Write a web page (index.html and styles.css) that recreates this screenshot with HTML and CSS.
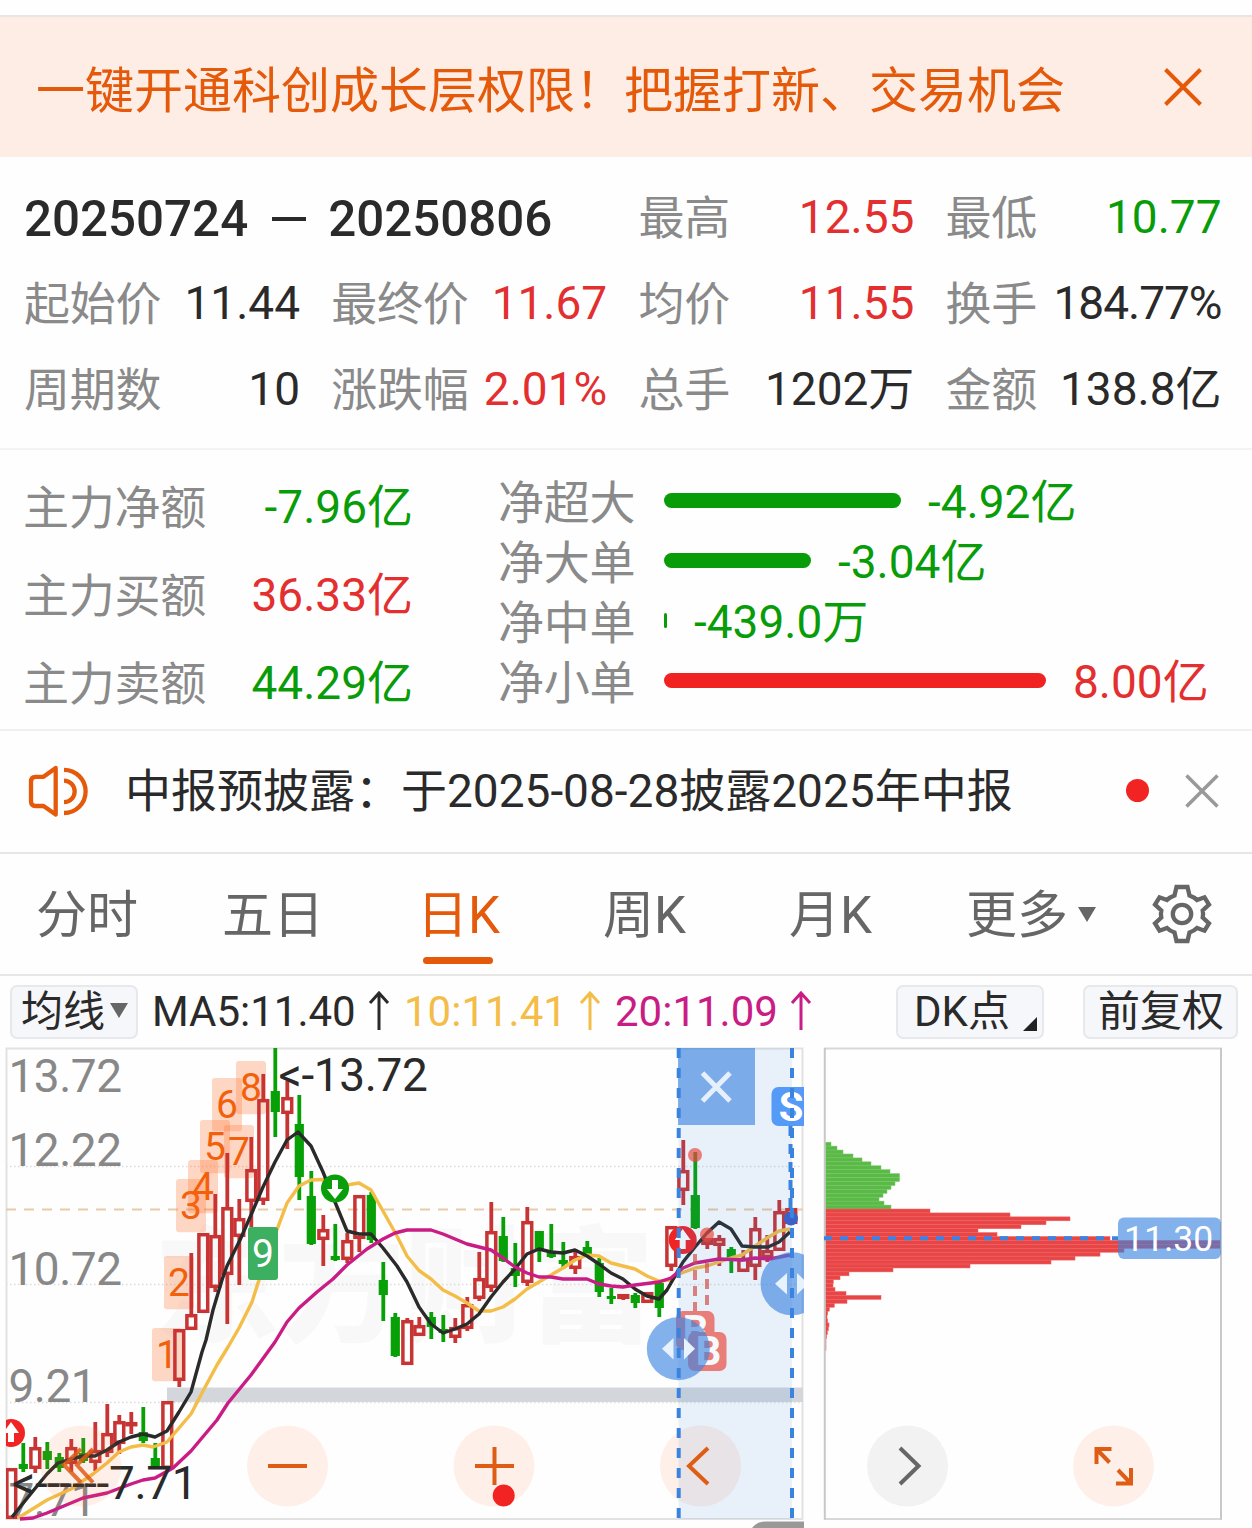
FILE: index.html
```html
<!DOCTYPE html>
<html lang="zh-CN">
<head>
<meta charset="utf-8">
<title>日K 区间统计</title>
<link rel="stylesheet" href="styles.css">
</head>
<body>
<header class="banner">
  <span class="banner-text">一键开通科创成长层权限！把握打新、交易机会</span>
  <svg class="banner-close" width="40" height="40" viewBox="0 0 40 40"><path d="M2.500 2.500L37.500 37.500M37.500 2.500L2.500 37.500"/></svg>
</header>

<section class="summary">
  <div class="range"><span>20250724</span><i class="range-dash"></i><span>20250806</span></div>
  <div class="cell"><span class="label">最高</span><span class="up">12.55</span></div>
  <div class="cell"><span class="label">最低</span><span class="down">10.77</span></div>
  <div class="cell"><span class="label">起始价</span><span>11.44</span></div>
  <div class="cell"><span class="label">最终价</span><span class="up">11.67</span></div>
  <div class="cell"><span class="label">均价</span><span class="up">11.55</span></div>
  <div class="cell"><span class="label">换手</span><span class="tight">184.77%</span></div>
  <div class="cell"><span class="label">周期数</span><span>10</span></div>
  <div class="cell"><span class="label">涨跌幅</span><span class="up">2.01%</span></div>
  <div class="cell"><span class="label">总手</span><span>1202万</span></div>
  <div class="cell"><span class="label">金额</span><span>138.8亿</span></div>
</section>

<section class="flows">
  <div class="main-flow">
    <div class="cell"><span class="label">主力净额</span><span class="down">-7.96亿</span></div>
    <div class="cell"><span class="label">主力买额</span><span class="up">36.33亿</span></div>
    <div class="cell"><span class="label">主力卖额</span><span class="down">44.29亿</span></div>
  </div>
  <div class="net-flow">
    <div class="net-row down"><span class="label">净超大</span><i class="bar" style="width:237px"></i><span>-4.92亿</span></div>
    <div class="net-row down"><span class="label">净大单</span><i class="bar" style="width:147px"></i><span>-3.04亿</span></div>
    <div class="net-row down"><span class="label">净中单</span><i class="bar" style="width:3px"></i><span>-439.0万</span></div>
    <div class="net-row up"><span class="label">净小单</span><i class="bar" style="width:382px"></i><span>8.00亿</span></div>
  </div>
</section>

<section class="notice">
  <svg class="speaker" width="66" height="56" viewBox="26 762 66 56"><path d="M55.700 767L43.500 775.800H35.500Q31 775.800 31 780.500V800.500Q31 805 35.500 805H43.500L55.700 813.500Z"/><path d="M64 779.700A10.700 10.700 0 0 1 64 801.100M64 768.800A21.600 21.600 0 0 1 64 812"/></svg>
  <span class="notice-text">中报预披露：于2025-08-28披露2025年中报</span>
  <i class="dot"></i>
  <svg class="notice-close" width="34" height="34" viewBox="0 0 34 34"><path d="M1.500 1.500L32.500 32.500M32.500 1.500L1.500 32.500"/></svg>
</section>

<nav class="tabs">
  <span class="tab">分时</span>
  <span class="tab">五日</span>
  <span class="tab active">日K</span>
  <span class="tab">周K</span>
  <span class="tab">月K</span>
  <span class="tab">更多<svg class="caret" width="18" height="15" viewBox="0 0 18 15"><path d="M0 0H18L9 15Z"/></svg></span>
  <svg class="gear" width="62" height="62" viewBox="-31 -31 62 62"><path d="M-5.500 -27H5.500L7.500 -18.500Q12 -17 15 -14L22.500 -16.700L27 -9.300L20.700 -3.500Q21.500 0 20.700 3.500L27 9.300L22.500 16.700L15 14Q12 17 7.500 18.500L5.500 27H-5.500L-7.500 18.500Q-12 17 -15 14L-22.500 16.700L-27 9.300L-20.700 3.500Q-21.500 0 -20.700 -3.500L-27 -9.300L-22.500 -16.700L-15 -14Q-12 -17 -7.500 -18.500Z"/><circle r="9.200"/></svg>
</nav>

<section class="toolbar">
  <span class="chip chip-ma">均线<svg class="caret" width="18" height="15" viewBox="0 0 18 15"><path d="M0 0H18L9 15Z"/></svg></span>
  <span class="ma ma5">MA5:11.40<svg class="arrow" width="22" height="40" viewBox="0 0 22 40"><path d="M11 39V3M2 12L11 2L20 12"/></svg></span>
  <span class="ma ma10">10:11.41<svg class="arrow" width="22" height="40" viewBox="0 0 22 40"><path d="M11 39V3M2 12L11 2L20 12"/></svg></span>
  <span class="ma ma20">20:11.09<svg class="arrow" width="22" height="40" viewBox="0 0 22 40"><path d="M11 39V3M2 12L11 2L20 12"/></svg></span>
  <span class="chip chip-dk">DK点<svg class="corner" width="14" height="14" viewBox="0 0 14 14"><path d="M14 0V14H0Z"/></svg></span>
  <span class="chip chip-fq">前复权</span>
</section>

<section class="charts">
  <svg class="kline" width="815" height="488" viewBox="0 1040 815 488">
    <defs><clipPath id="plot"><rect x="6" y="1040" width="798" height="488"/></clipPath></defs>
    <text class="watermark" x="154" y="1332">东方财富</text>
    <path class="grid" d="M6 1166.500H803M6 1284.500H803M6 1402.500H803"/>
    <rect class="frame" x="6.500" y="1048.500" width="796" height="470.500"/>
    <rect class="gap-band" x="167" y="1387.500" width="636" height="14.500"/>
    <path class="last-price" d="M6 1209.500H803"/>
    <g class="axis">
      <text x="8.500" y="1092">13.72</text><text x="8.500" y="1166">12.22</text><text x="8.500" y="1284.500">10.72</text><text x="8.500" y="1402">9.21</text><text x="8.500" y="1516">7.71</text>
    </g>
    <g id="counts" class="counts"></g>
    <g clip-path="url(#plot)">
      <g id="candles"></g>
      <polyline class="line ma10-line" points="18,1518 47,1500 71,1489 93,1474 107,1463 119,1452 131,1447 143,1445 153,1447 167,1442 179,1428 191,1414 203,1391 217,1365 228,1347 239,1328 252,1302 259,1280 268,1252 278,1227 287,1203 299,1186 311,1180 322,1179.500 335,1182 347,1185 359,1183 371,1190 383,1211 397,1236 407,1256 419,1270.500 431,1279 443,1290 455,1296 467,1303 479,1311 491,1311 503,1307 515,1299 527,1289 539,1282 551,1275 563,1268 575,1260 587,1255 599,1256 611,1263 623,1266 635,1269 647,1276 659,1281 671,1280 679,1274 695,1268 707,1266 719,1262 731,1258 742,1255 755,1246 767,1238 779,1231 790,1229"/>
      <polyline class="line ma5-line" points="12,1517 33,1491 47,1474 58,1463 71,1459 83,1456 95,1456 107,1450 119,1442 131,1437 143,1434 155,1437 167,1431 179,1412 191,1392 202,1352 206,1340 213,1310 222,1280 227,1266 240,1240 251,1215 263,1187 275,1162 287,1140 298,1132 311,1146 323,1172 335,1202 347,1231 359,1234 371,1234 383,1248 397,1266 407,1282 419,1307 431,1324 443,1333 455,1329 467,1324 479,1314 491,1297 503,1282 515,1269 527,1254 539,1249 551,1252 563,1253 575,1250 587,1256 599,1264 611,1273 623,1279 635,1289 647,1296 659,1299 667,1290 679,1269 683,1262 695,1247 707,1233 719,1222 731,1229 742,1246 755,1247 768,1247 779,1242 790,1232"/>
      <polyline class="line ma20-line" points="20,1519 33,1518 47,1513 71,1503 83,1498 107,1493 131,1484 143,1480 155,1478 173,1468 191,1451 217,1420 228,1403 251,1375 275,1342 287,1322 299,1308 317,1292 333,1279 347,1265 367,1249 383,1239 395,1233 407,1230 431,1230 443,1234 467,1244 491,1250 503,1258 515,1267 527,1273 539,1277 551,1277 563,1279 587,1279 599,1284 611,1286 623,1287 635,1285 659,1282 671,1278 683,1268 695,1263 707,1261 719,1259 742,1260 755,1258 770,1259 790,1255"/>
    </g>
    <rect class="nine" x="248" y="1227" width="30" height="53" rx="3"/><text class="nine-text" x="263" y="1266.500">9</text>
    <g class="note"><text x="278.500" y="1090.500">&lt;-13.72</text><text x="12" y="1499">&lt;------</text><text x="109" y="1499">7.71</text></g>

    <g clip-path="url(#plot)">
      <circle class="signal-sell" cx="335" cy="1188.500" r="14"/><polygon class="signal-arrow" points="332,1180 338,1180 338,1189 343,1189 335,1199 327,1189 332,1189"/>
      <circle class="signal-buy" cx="11" cy="1433" r="14"/><polygon class="signal-arrow" points="8,1442 14,1442 14,1433 19,1433 11,1422 3,1433 8,1433"/>
      <circle class="signal-buy" cx="682.700" cy="1240" r="14"/><polygon class="signal-arrow" points="679.700,1249 685.700,1249 685.700,1240 690.700,1240 682.700,1229 674.700,1240 679.700,1240"/>
    </g>

    <g class="round">
      <circle cx="81" cy="1466" r="40.500"/><circle cx="287.500" cy="1466" r="40.500"/><circle cx="494" cy="1466" r="40.500"/><circle cx="700.500" cy="1466" r="40.500"/>
    </g>
    <path class="round-icon faded" d="M81 1449L64 1465L81 1482.500M93 1449L77 1465L93 1482.500"/>

    <rect class="selection" x="678.500" y="1048" width="113.500" height="471"/>
    <path class="round-icon" d="M268 1466H307M475 1466H514M494.500 1447V1485M708 1448L689 1466L708 1484"/>
    <circle class="red-dot" cx="503.700" cy="1495.500" r="11"/>

    <g class="trade">
      <path d="M695 1254V1311M707 1263V1328"/>
      <circle cx="695" cy="1155" r="7"/><circle cx="707" cy="1234.500" r="7"/>
      <rect x="676" y="1311" width="38.500" height="39" rx="7"/><text x="695.500" y="1344">B</text>
      <rect x="688" y="1332" width="38.500" height="39" rx="7"/><text x="708.500" y="1365">B</text>
    </g>
    <g clip-path="url(#plot)">
      <rect class="sell-badge" x="771.500" y="1087" width="39" height="39" rx="7"/><text class="sell-text" x="791" y="1121">S</text>
      <circle class="sell-dot" cx="791" cy="1218.500" r="7"/>
      <path class="sell-link" d="M790.500 1126V1212"/>
      <rect class="handle" x="678" y="1048" width="77" height="77"/>
      <path class="select-close" d="M702.500 1073L730 1101M730 1073L702.500 1101"/>
      <path class="select-edge" d="M678.700 1048V1519M792 1048V1519"/>
      <circle class="handle" cx="678.300" cy="1348.700" r="31.500"/><circle class="handle" cx="792" cy="1283.800" r="31.500"/>
      <path class="handle-arrow" d="M673.500 1338V1359.500L662 1348.700ZM684 1338V1359.500L695 1348.700ZM787 1273V1294.500L775 1283.800ZM797 1273V1294.500L808 1283.800Z"/>
    </g>
    <path class="bottom-tab" d="M752 1528Q757 1521.500 766 1521.500H804V1528Z"/>
  </svg>
  <svg class="chips-chart" width="437" height="488" viewBox="815 1040 437 488">
    <g id="profile"></g>
    <path class="profile-rule" d="M824 1048.500H1222M824 1519H1222"/>
    <path class="profile-side" d="M824.800 1048V1519.500M1221 1048V1519.500"/>
    <path class="cost-line" d="M824 1238.300H1118"/>
    <rect class="handle" x="1118" y="1217.500" width="103" height="41.500" rx="6"/>
    <text class="cost-text" x="1124" y="1250.500">11.30</text>
    <circle class="round-gray" cx="907.500" cy="1466" r="40.500"/><path class="round-icon gray" d="M900 1448L918.500 1466L900 1484"/>
    <g class="round"><circle cx="1113.500" cy="1466" r="40.500"/></g>
    <path class="round-icon expand" d="M1096.500 1464V1449H1111.500M1096.500 1449L1109.500 1462.500M1131 1468V1483.500H1116M1131 1483.500L1118 1470"/>
  </svg>
</section>
<script src="chart.js"></script>
</body>
</html>
```
FILE: styles.css
```css
* { box-sizing: border-box; }
body {
  margin: 0;
  width: 1252px;
  height: 1528px;
  overflow: hidden;
  background: #fefefe;
  color: #2a2a2a;
  font-family: Roboto, "Noto Sans CJK SC", sans-serif;
  font-size: 46px;
  line-height: 60px;
  white-space: nowrap;
}
svg { display: block; flex: none; }
path, polyline { fill: none; }

.banner {
  display: flex;
  align-items: center;
  justify-content: space-between;
  height: 142px;
  margin-top: 15px;
  padding: 2px 49px 0 36px;
  border-top: 2px solid #eae4e2;
  background: #fdede4;
  color: #e5590b;
  font-size: 49px;
}
.banner-text { padding-top: 7px; }
.banner-close { margin-bottom: 2px; }
.banner-close path { stroke: #e5590b; stroke-width: 4; }

.summary {
  display: grid;
  grid-template-columns: repeat(4, 276px);
  grid-auto-rows: 86px;
  column-gap: 31.200px;
  height: 293px;
  padding: 17px 0 0 24px;
  border-bottom: 2px solid #f3f3f3;
}
.cell { display: flex; align-items: center; justify-content: space-between; }
.label { padding-top: 2px; color: #8a8a8a; letter-spacing: -0.250px; }
.up { color: #e32f2f; }
.down { color: #089c08; }
.tight { letter-spacing: -1px; }
.range {
  grid-column: span 2;
  display: flex;
  align-items: center;
  padding-top: 4px;
  font-size: 49.300px;
  font-weight: 500;
}
.range-dash { width: 34px; height: 4px; margin: 0 22px 0 24px; background: #2a2a2a; }

.flows { display: flex; height: 281px; border-bottom: 2px solid #f0f0f0; }
.main-flow { width: 413px; padding: 13px 0 0 23px; }
.main-flow .cell { height: 88px; }
.net-flow { margin-left: 85px; padding-top: 21px; }
.net-row { display: flex; align-items: center; height: 60px; }
.net-row span { padding-top: 2px; }
.net-row .label { width: 166px; padding-top: 4px; }
.bar { height: 15px; margin: 0 27px 2px 0; border-radius: 8px; background: currentColor; }
.net-row.up .bar { background: #f02222; }

.notice {
  display: flex;
  align-items: center;
  height: 123px;
  padding: 0 33px 2px 26px;
  border-bottom: 2px solid #e6e6e6;
}
.speaker path { stroke: #e5590b; stroke-width: 4.300; stroke-linejoin: round; }
.notice-text { margin-left: 33px; }
.dot { width: 23px; height: 23px; margin-left: auto; border-radius: 50%; background: #f22323; }
.notice-close { margin-left: 36px; }
.notice-close path { stroke: #999; stroke-width: 3.500; }

.tabs {
  display: grid;
  grid-template-columns: 186px 195px 186px 186px 177px 185px 62px;
  align-items: center;
  height: 122px;
  padding-left: 36px;
  border-bottom: 2px solid #e6e6e6;
  color: #666;
  font-size: 51px;
}
.tab { display: flex; align-items: center; height: 100%; padding-top: 4px; }
.tab.active { position: relative; color: #e5590b; }
.tab.active::after {
  content: "";
  position: absolute;
  left: 6px;
  bottom: 10px;
  width: 70px;
  height: 7px;
  border-radius: 3.500px;
  background: #e5590b;
}
.caret { margin-left: 10px; }
.tab .caret { margin-bottom: 4px; }
.caret path { fill: #666; }
.gear path, .gear circle { fill: none; stroke: #666; stroke-width: 4.300; }

.toolbar {
  display: flex;
  align-items: center;
  height: 64px;
  padding: 0 14px 0 10px;
  font-size: 42px;
}
.chip {
  display: flex;
  align-items: center;
  height: 54px;
  margin-top: 7px;
  border: 2px solid #e6e8ec;
  border-radius: 7px;
  background: #f6f7fa;
}
.chip-ma { width: 128px; padding-left: 9px; margin-right: 14px; }
.chip-ma .caret { margin: 0 0 2px 5px; }
.ma { display: flex; align-items: center; padding-top: 8px; }
.ma5 { width: 252px; }
.ma10 { width: 211px; color: #f3bd48; }
.ma20 { color: #c91c85; }
.arrow { margin-left: 12px; margin-bottom: 2px; }
.arrow path { stroke: currentColor; stroke-width: 3; }
.chip-dk { width: 148px; margin-left: auto; padding-left: 16px; }
.corner { margin: 24px 0 0 13px; }
.corner path { fill: #222; }
.chip-fq { width: 155px; margin-left: 39px; padding-left: 13px; }

.charts { display: flex; height: 488px; }
.charts text { font-family: Roboto, "Noto Sans CJK SC", sans-serif; }
.watermark { font-size: 125px; font-weight: 900; fill: #f8f8f8; }
.grid { stroke: #dcdcdc; stroke-width: 1.500; stroke-dasharray: 1.500 2.500; }
.frame { fill: none; stroke: #e2e2e2; stroke-width: 2; }
.gap-band { fill: #d3d7dc; }
.last-price { stroke: #e9cba8; stroke-width: 2; stroke-dasharray: 10 8; }
.axis { fill: #888; font-size: 46px; letter-spacing: -0.500px; }
.note { fill: #2a2a2a; font-size: 46px; letter-spacing: -0.400px; }
.counts rect { fill: #ff6a20; fill-opacity: .26; }
.counts text { fill: #f2600c; font-size: 39px; text-anchor: middle; }
.candle-up { fill: none; stroke: #c83434; }
.candle-up rect { stroke-width: 3.500; }
.candle-up path { stroke-width: 3.800; }
.candle-down rect { fill: #07a007; }
.candle-down path { stroke: #07a007; stroke-width: 3.800; }
.line { stroke-width: 3.400; stroke-linejoin: round; }
.ma5-line { stroke: #2a2a2a; }
.ma10-line { stroke: #f3bd48; }
.ma20-line { stroke: #c91c85; }
.nine { fill: #3daf60; }
.nine-text { fill: #fff; font-size: 39px; text-anchor: middle; }
.signal-sell { fill: #0a9f0a; }
.signal-buy { fill: #f02424; }
.signal-arrow { fill: #fff; }
.round circle { fill: #ff7a30; fill-opacity: .1; }
.round-gray { fill: #f2f2f2; }
.round-icon { stroke: #de5c14; stroke-width: 4; }
.round-icon.faded { opacity: .85; }
.round-icon.gray { stroke: #666; }
.red-dot { fill: #f22323; }
.selection { fill: #3a84df; fill-opacity: .11; }
.trade { opacity: .68; }
.trade path { stroke: #d24d47; stroke-width: 4; stroke-dasharray: 10 6; }
.trade circle, .trade rect { fill: #e8483e; }
.trade text, .sell-text { fill: #fff; font-size: 40px; font-weight: 700; text-anchor: middle; }
.sell-badge { fill: #559af7; }
.sell-dot { fill: #3a62c8; }
.sell-link { stroke: #3a84df; stroke-width: 4; stroke-dasharray: 10 8; }
.handle { fill: #3a84df; fill-opacity: .63; }
.select-close { stroke: #e6f0fc; stroke-width: 5; }
.select-edge { stroke: #3a84df; stroke-width: 4; stroke-dasharray: 10 10; }
.handle-arrow { fill: #e8f2fd; }
.bottom-tab { fill: #999; }
.profile-up { fill: #e84646; stroke: #f06060; stroke-width: .5; }
.profile-down { fill: #5bb947; stroke: #74c863; stroke-width: .5; }
.profile-rule { stroke: #d8d8d8; stroke-width: 2; }
.profile-side { stroke: #c8c8c8; stroke-width: 2; }
.cost-line { stroke: #3a84df; stroke-width: 4; stroke-dasharray: 8 8; }
.cost-text { fill: #fff; font-size: 35.500px; }
```
FILE: chart.js
```js
const NS = 'http://www.w3.org/2000/svg';
function add(parent, name, attrs, text) {
  const el = document.createElementNS(NS, name);
  for (const key in attrs) el.setAttribute(key, attrs[key]);
  if (text) el.textContent = text;
  parent.appendChild(el);
  return el;
}

// One entry per day: direction, wick top, body top, body bottom, wick bottom.
const days = [
  ['u',1468,1468,1519,1519],['d',1443,1464,1469,1472],['u',1437,1447,1469,1473],['d',1442,1451,1460,1469],
  ['d',1453,1457,1468,1472],['u',1439,1447,1464,1472],['d',1438,1453,1461,1463],['u',1422,1450,1463,1471],
  ['u',1404,1433,1453,1457],['u',1415,1421,1444,1454],['u',1412,1422,1426,1434],['d',1407,1432,1441,1443],
  ['d',1443,1458,1468,1468],['u',1401,1401,1469,1469],['u',1329,1329,1381,1387],['u',1253,1314,1330,1330],
  ['u',1233,1233,1313,1313],['u',1194,1235,1288,1292],['u',1153,1207,1275,1324],['u',1199,1218,1237,1285],
  ['u',1137,1169,1202,1227],['u',1074,1099,1201,1205],['d',1048,1091,1112,1137],['u',1081,1097,1114,1149],
  ['d',1095,1124,1177,1200],['d',1171,1196,1244,1245],['u',1215,1229,1240,1266],['d',1224,1256,1260,1261],
  ['u',1233,1240,1260,1263],['u',1195,1195,1239,1252],['d',1192,1195,1240,1243],['d',1262,1280,1295,1321],
  ['d',1313,1317,1356,1357],['u',1318,1320,1365,1365],['u',1317,1325,1336,1336],['d',1312,1317,1327,1339],
  ['d',1315,1329,1333,1342],['u',1318,1327,1338,1343],['u',1297,1304,1329,1331],['u',1252,1278,1299,1301],
  ['u',1202,1231,1288,1292],['d',1217,1236,1261,1262],['d',1243,1268,1276,1287],['u',1207,1221,1283,1286],
  ['d',1231,1231,1249,1262],['d',1224,1253,1257,1258],['d',1242,1260,1264,1269],['u',1249,1256,1269,1274],
  ['d',1241,1247,1255,1256],['d',1258,1263,1292,1297],['d',1288,1296,1299,1304],['u',1294,1294,1299,1300],
  ['d',1293,1295,1303,1308],['u',1292,1292,1303,1303],['d',1283,1283,1308,1317],['u',1226,1226,1267,1271],
  ['u',1140,1170,1191,1205],['d',1152,1195,1228,1229],['u',1238,1238,1245,1249],['u',1235,1238,1246,1266],
  ['d',1247,1249,1258,1273],['u',1250,1258,1272,1272],['u',1217,1228,1267,1280],['u',1235,1250,1258,1262],
  ['u',1200,1211,1251,1251],['u',1208,1208,1224,1224]
];
const candles = document.getElementById('candles');
days.forEach(([dir, high, top, bottom, low], i) => {
  const x = 11.3 + 12 * i;
  const g = add(candles, 'g', { class: dir === 'u' ? 'candle-up' : 'candle-down' });
  if (dir === 'u') {
    add(g, 'path', { d: `M${x} ${high}V${top}M${x} ${bottom}V${low}` });
    add(g, 'rect', { x: x - 4.4, y: top + 1.7, width: 8.8, height: Math.max(bottom - top - 3.4, 1) });
  } else {
    add(g, 'path', { d: `M${x} ${high}V${low}` });
    add(g, 'rect', { x: x - 4.6, y: top, width: 9.2, height: bottom - top });
  }
});

// Nine-turn count labels.
const counts = document.getElementById('counts');
[[1,152,1328],[2,164,1256],[3,176,1179],[4,188,1160],[5,200,1120],[6,212,1078],[7,224,1125],[8,236,1061]].forEach(([n, x, y]) => {
  add(counts, 'rect', { x, y, width: 30, height: 53.3, rx: 3 });
  add(counts, 'text', { x: x + 15, y: y + 40 }, String(n));
});

// Cost distribution, one row per price step.
const profile = document.getElementById('profile');
const above = [6,12,18,28,37,46,56,65,74.5,74.5,70,66,62,58,54,59,66];
const below = [105,185,245,221,196,153,172,285,396,396,299,275,250,226,145,68,24,15,8.3,8,10,21,56,22,9.3,4.3,2.7,2,2.7,4,3.3,2.3,1.5,1,1,1];
above.concat(below).forEach((w, i) => {
  add(profile, 'rect', { class: i < above.length ? 'profile-down' : 'profile-up', x: 825, y: 1142.2 + 3.93 * i, width: w, height: 3.93 });
});
```
